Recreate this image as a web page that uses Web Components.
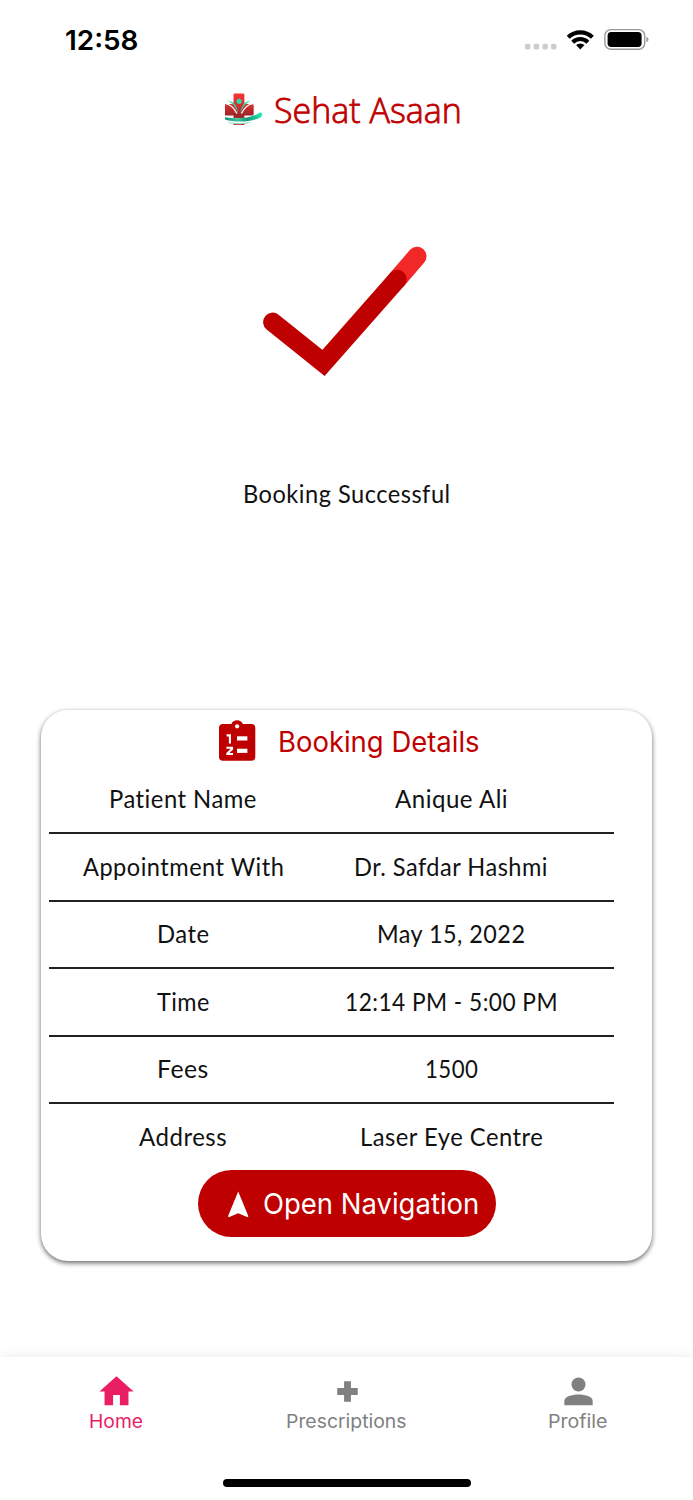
<!DOCTYPE html>
<html lang="en">
<head>
<meta charset="utf-8">
<title>Sehat Asaan</title>
<style>
    html, body {
        margin: 0;
        padding: 0;
        background: #fff;
    }
</style>
</head>
<body>
<booking-screen></booking-screen>

<script>
// Single line of text squeezed or stretched to a given width
class FitText extends HTMLElement {
    constructor() {
        super();
        this.attachShadow({ mode: 'open' });
        this.shadowRoot.innerHTML = `
            <style>
                :host {
                    display: block;
                    flex: none;
                    white-space: nowrap;
                }
                span {
                    display: inline-block;
                    transform-origin: 0 50%;
                }
            </style>
            <span><slot></slot></span>
        `;
    }

    connectedCallback() {
        const width = Number(this.getAttribute('width'));
        const span = this.shadowRoot.querySelector('span');
        this.style.width = `${width}px`;
        span.style.transform = `scaleX(${width / span.offsetWidth})`;
    }
}

class StatusBar extends HTMLElement {
    constructor() {
        super();
        this.attachShadow({ mode: 'open' });
        this.shadowRoot.innerHTML = `
            <style>
                :host {
                    display: flex;
                    justify-content: space-between;
                    align-items: center;
                    box-sizing: border-box;
                    height: 80px;
                    padding: 0 43px 0 65px;
                    font: 600 27.5px/32px Inter, sans-serif;
                    color: #000;
                }
                svg { display: block; }
            </style>
            <fit-text width="73"><slot></slot></fit-text>
            <svg width="126" height="24" viewBox="524 28 126 24">
                <g fill="#ccc">
                    <rect x="525" y="43.8" width="5.4" height="5.6" rx="1.6"/>
                    <rect x="533.7" y="43.8" width="5.4" height="5.6" rx="1.6"/>
                    <rect x="542.4" y="43.8" width="5.4" height="5.6" rx="1.6"/>
                    <rect x="551.1" y="43.8" width="5.4" height="5.6" rx="1.6"/>
                </g>
                <g fill="none" stroke="#000" stroke-width="4.1">
                    <path d="M568.2 37.3a17.3 17.3 0 0 1 24.2 0"/>
                    <path d="M572.7 42.2a10.8 10.8 0 0 1 15.2 0"/>
                </g>
                <path d="M576.1 45.1a6 6 0 0 1 8.4 0l-4.2 4.5z"/>
                <rect x="604.9" y="29.6" width="39.8" height="19.6" rx="6" fill="none" stroke="#999" stroke-width="1.4"/>
                <rect x="607.6" y="32.1" width="34" height="14.8" rx="3.6"/>
                <path d="M646.4 37c2.8 .6 2.8 4.4 0 5z" fill="#999"/>
            </svg>
        `;
    }
}

class BrandHeader extends HTMLElement {
    constructor() {
        super();
        this.attachShadow({ mode: 'open' });
        this.shadowRoot.innerHTML = `
            <style>
                :host {
                    display: flex;
                    align-items: center;
                    gap: 10px;
                    height: 60px;
                    padding-left: 224px;
                    font: 300 34px/46px "Open Sans", sans-serif;
                    color: #c00000;
                }
                fit-text {
                    margin-top: -1px;
                    -webkit-text-stroke: 0.8px #c00000;
                }
            </style>
            <svg width="40" height="36" viewBox="224 92 40 36">
                <defs>
                    <linearGradient id="cross" x1="0" y1="0" x2="0" y2="1">
                        <stop offset="0" stop-color="#fb3436"/>
                        <stop offset=".35" stop-color="#d92e30"/>
                        <stop offset=".7" stop-color="#9c2528"/>
                        <stop offset="1" stop-color="#c33"/>
                    </linearGradient>
                    <linearGradient id="swoosh" x1="0" y1="0" x2="1" y2="0">
                        <stop offset="0" stop-color="#128f72"/>
                        <stop offset=".35" stop-color="#36c79f"/>
                        <stop offset=".6" stop-color="#159676"/>
                        <stop offset="1" stop-color="#22f0b8"/>
                    </linearGradient>
                </defs>
                <path fill="url(#cross)" d="M235 93.6h8q1.4 0 1.4 1.4v9h7.8q1.5 0 1.5 1.500v8.500q0 1.500-1.500 1.500h-7.800v9.500h-10.900V115.500H225v-11.500h8.500V95q0-1.400 1.500-1.400z"/>
                <path fill="none" stroke="#fff" stroke-width="1.300" d="M225.500 103.600q7.500 1.400 11.300 9.900M252.800 103.600q-7.500 1.400-11.300 9.900"/>
                <path fill="#2fd6a8" d="M227.500 100.600c6 .6 10.200 5.200 10.600 13.400-1.800-6.400-5.100-10.600-10.600-13.400zM251 100.600c-6 .6-10.200 5.200-10.600 13.400 1.800-6.400 5.100-10.600 10.600-13.400z"/>
                <circle cx="239.100" cy="101.300" r="2.600" fill="#27dcae"/>
                <path fill="#fff" d="M225 117q16 3.500 31-2v5.500q-14 5-31 1.500z"/>
                <path fill="url(#swoosh)" d="M225 117.300c12 2.300 27 1 35-4.800 2.200 0 3 2 1.400 3.900-2.800 3-13 5.200-21 5.200-6 0-11-.6-15.400-2z"/>
                <path fill="#8fd3c1" d="M227 121.800q11 2.400 25-.1l-4.500 1.900q-9 1.500-17 0z"/>
            </svg>
            <fit-text width="188"><slot></slot></fit-text>
        `;
    }
}

class SuccessMark extends HTMLElement {
    constructor() {
        super();
        this.attachShadow({ mode: 'open' });
        this.shadowRoot.innerHTML = `
            <style>
                :host {
                    display: flex;
                    flex-direction: column;
                    align-items: center;
                    gap: 88px;
                    box-sizing: border-box;
                    height: 570px;
                    padding-top: 100px;
                    font: 400 24.3px/32px Lato, sans-serif;
                    letter-spacing: 0.5px;
                    color: #111;
                }
            </style>
            <svg width="173" height="150" viewBox="260 240 173 150" fill="none" stroke-width="19" stroke-linecap="round">
                <path stroke="#f22727" d="M397.3 279.3 417 256.3"/>
                <path stroke="#be0000" d="M272.6 322.1 323.5 363 397.3 279.3"/>
            </svg>
            <fit-text width="208"><slot></slot></fit-text>
        `;
    }
}

class DetailRow extends HTMLElement {
    constructor() {
        super();
        this.attachShadow({ mode: 'open' });
        this.shadowRoot.innerHTML = `
            <style>
                :host {
                    display: flex;
                    box-sizing: border-box;
                    width: 565px;
                    height: 67.5px;
                    border-bottom: 2px solid #222;
                }
                :host([last]) { border-bottom-color: transparent; }
                div {
                    display: flex;
                    align-items: center;
                    justify-content: center;
                    width: 268px;
                }
            </style>
            <div><slot name="label"></slot></div>
            <div><slot name="value"></slot></div>
        `;
    }
}

class BookingCard extends HTMLElement {
    constructor() {
        super();
        this.attachShadow({ mode: 'open' });
        this.shadowRoot.innerHTML = `
            <style>
                :host {
                    display: flex;
                    flex-direction: column;
                    box-sizing: border-box;
                    width: 611px;
                    height: 551px;
                    margin-left: 41px;
                    padding-left: 8px;
                    border-radius: 27px;
                    background: #fff;
                    box-shadow: 0 2px 5px rgba(0, 0, 0, 0.6);
                    font: 400 24.3px/32px Lato, sans-serif;
                    letter-spacing: 0.5px;
                    color: #111;
                }
                header {
                    display: flex;
                    align-items: center;
                    gap: 21px;
                    height: 56.5px;
                    flex: none;
                    padding: 5px 0 0 168px;
                    box-sizing: border-box;
                    font: 400 28px/34px Inter, sans-serif;
                    letter-spacing: 0;
                    color: #c00000;
                }
                header fit-text { margin-top: 3px; }
                button {
                    display: flex;
                    align-items: center;
                    gap: 12px;
                    flex: none;
                    width: 298px;
                    height: 67px;
                    margin: -1.5px 0 0 148.5px;
                    padding: 1px 0 0 27px;
                    border: 0;
                    border-radius: 34px;
                    background: #be0000;
                    font: 400 29px/34px Inter, sans-serif;
                    color: #fff;
                }
            </style>
            <header>
                <svg width="40" height="42" viewBox="217 720 40 42">
                    <path fill="#be0000" d="M223 724h8.4a6.2 6.2 0 0 1 11.4 0H251.3a4 4 0 0 1 4 4v28.7a4 4 0 0 1-4 4H223a4 4 0 0 1-4-4V728a4 4 0 0 1 4-4z"/>
                    <g fill="#fff">
                        <circle cx="237.1" cy="726.3" r="2.1"/>
                        <rect x="237" y="736.3" width="10.4" height="4.2"/>
                        <rect x="237" y="748.7" width="10.4" height="4.2"/>
                    </g>
                    <!-- list markers -->
                    <g fill="none" stroke="#fff" stroke-width="2.1">
                        <path d="M226.6 735.4h3.3v8"/>
                        <path d="M226.4 747.8h5.6v1.2l-4.6 4.4v.6h5.600"/>
                    </g>
                </svg>
                <fit-text width="202"><slot name="title"></slot></fit-text>
            </header>
            <slot></slot>
            <button>
                <svg width="26" height="30" viewBox="225 1188 26 30">
                    <path fill="#fff" d="M238.2 1190.5 248.4 1215.3 247.6 1216.2 238.2 1212.2 228.8 1216.2 228 1215.3z"/>
                </svg>
                <fit-text width="216"><slot name="action"></slot></fit-text>
            </button>
        `;
    }
}

class TabItem extends HTMLElement {
    constructor() {
        super();
        this.attachShadow({ mode: 'open' });
        const icons = {
            home: '<path d="M10 20v-6h4v6h5v-8h3L12 3 2 12h3v8z"/>',
            plus: '<path d="M10 6h4v4h4v4h-4v4h-4v-4H6v-4h4z"/>',
            person: '<circle cx="12" cy="7.9" r="4.1"/><path d="M3.7 20v-2.4C3.7 15 8 13.8 12 13.8s8.3 1.2 8.3 3.8V20z"/>'
        };
        this.shadowRoot.innerHTML = `
            <style>
                :host {
                    display: flex;
                    flex: 1;
                    flex-direction: column;
                    align-items: center;
                    padding-top: 14px;
                    color: #808080;
                }
                :host([active]) { color: #e91e63; }
                svg { display: block; margin-left: 1px; }
                fit-text { margin-top: -1px; }
            </style>
            <svg width="41" height="41" viewBox="0 0 24 24" fill="currentColor">${icons[this.getAttribute('icon')]}</svg>
            <fit-text width="${this.getAttribute('label-width')}"><slot></slot></fit-text>
        `;
    }
}

class TabBar extends HTMLElement {
    constructor() {
        super();
        this.attachShadow({ mode: 'open' });
        this.shadowRoot.innerHTML = `
            <style>
                :host {
                    display: flex;
                    flex-direction: column;
                    align-items: center;
                    justify-content: space-between;
                    box-sizing: border-box;
                    height: 143px;
                    margin-top: auto;
                    padding-bottom: 13px;
                    background: #fff;
                    box-shadow: 0 0 12px rgba(0, 0, 0, 0.09);
                    font: 400 18.6px/20px Inter, sans-serif;
                }
                nav { display: flex; width: 100%; }
                .indicator {
                    width: 248px;
                    height: 8px;
                    border-radius: 4px;
                    background: #000;
                }
            </style>
            <nav><slot></slot></nav>
            <div class="indicator"></div>
        `;
    }
}

class BookingScreen extends HTMLElement {
    constructor() {
        super();
        this.attachShadow({ mode: 'open' });
        // [label, width, value, width]
        const rows = [
            ['Patient Name', 148, 'Anique Ali', 113],
            ['Appointment With', 201, 'Dr. Safdar Hashmi', 194],
            ['Date', 53, 'May 15, 2022', 148],
            ['Time', 53, '12:14 PM - 5:00 PM', 213],
            ['Fees', 52, '1500', 53],
            ['Address', 88, 'Laser Eye Centre', 183]
        ];
        this.shadowRoot.innerHTML = `
            <style>
                :host {
                    display: flex;
                    flex-direction: column;
                    width: 693px;
                    height: 1500px;
                    overflow: hidden;
                    background: #fff;
                }
            </style>
            <status-bar>12:58</status-bar>
            <brand-header>Sehat Asaan</brand-header>
            <success-mark>Booking Successful</success-mark>
            <booking-card>
                <span slot="title">Booking Details</span>
                ${rows.map(([label, lw, value, vw], i) => `
                    <detail-row ${i === rows.length - 1 ? 'last' : ''}>
                        <fit-text slot="label" width="${lw}">${label}</fit-text>
                        <fit-text slot="value" width="${vw}">${value}</fit-text>
                    </detail-row>
                `).join('')}
                <span slot="action">Open Navigation</span>
            </booking-card>
            <tab-bar>
                <tab-item icon="home" label-width="54" active>Home</tab-item>
                <tab-item icon="plus" label-width="121">Prescriptions</tab-item>
                <tab-item icon="person" label-width="59">Profile</tab-item>
            </tab-bar>
        `;
    }
}

// Outer elements first, so slotted text is in place when fit-text measures it
customElements.define('booking-screen', BookingScreen);
customElements.define('status-bar', StatusBar);
customElements.define('brand-header', BrandHeader);
customElements.define('success-mark', SuccessMark);
customElements.define('booking-card', BookingCard);
customElements.define('detail-row', DetailRow);
customElements.define('tab-bar', TabBar);
customElements.define('tab-item', TabItem);
customElements.define('fit-text', FitText);
</script>
</body>
</html>
